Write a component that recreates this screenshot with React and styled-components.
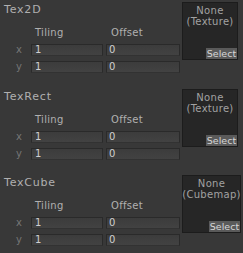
import React from "react";
import styled, { createGlobalStyle } from "styled-components";

const GlobalStyle = createGlobalStyle`
  body {
    margin: 0;
    background: #383838;
    font-family: "DejaVu Sans", "Liberation Sans", sans-serif;
  }
`;

const Panel = styled.div`
  width: 243px;
  height: 253px;
  background: #383838;
  overflow: hidden;
`;

const Section = styled.div`
  display: flex;
  height: ${(p) => p.h}px;
  padding: 0 5px 0 4px;
  box-sizing: border-box;
`;

const Left = styled.div`
  flex: 1;
  display: flex;
  flex-direction: column;
  padding-top: 3px;
`;

const Title = styled.div`
  font-size: 11px;
  line-height: 14px;
  color: #b0b0b0;
  letter-spacing: 0.8px;
`;

const Grid = styled.div`
  display: grid;
  grid-template-columns: 24px 72px 74px;
  column-gap: 3px;
  align-items: center;
  margin-top: ${(p) => p.mt}px;
`;

const Head = styled.div`
  font-size: 10px;
  line-height: 12px;
  color: #b0b0b0;
  letter-spacing: 0.3px;
  padding-left: ${(p) => p.pl}px;
`;

const Axis = styled.div`
  font-size: 10px;
  line-height: 12px;
  color: #767676;
  text-align: right;
  padding-right: 6px;
`;

const Field = styled.div`
  height: 12px;
  box-sizing: border-box;
  border: 1px solid #2a2a2a;
  border-bottom-color: #323232;
  background: linear-gradient(#3c3c3c, #424242);
  font-size: 10px;
  line-height: 10px;
  color: #cfcfcf;
  padding-left: ${(p) => p.pl}px;
`;

const Box = styled.div`
  width: 59px;
  height: 58px;
  margin-top: 2px;
  margin-left: 2px;
  box-sizing: border-box;
  border: 1px solid #1c1c1c;
  background: #262626;
  display: flex;
  flex-direction: column;
  align-items: center;
`;

const BoxText = styled.div`
  font-size: 10px;
  line-height: 11px;
  color: #a2a2a2;
  letter-spacing: 0.3px;
  text-align: center;
  padding-top: 2px;
  flex: 1;
  white-space: nowrap;
`;

const Select = styled.div`
  align-self: flex-end;
  width: 31px;
  height: 11px;
  background: #5a5a5a;
  color: #d6d6d6;
  font-size: 9.5px;
  line-height: 11px;
  text-align: center;
  white-space: nowrap;
`;

const slots = [
  { name: "Tex2D", kind: "Texture", h: 87 },
  { name: "TexRect", kind: "Texture", h: 86 },
  { name: "TexCube", kind: "Cubemap", h: 80 },
];

function Slot({ name, kind, h }) {
  return (
    <Section h={h}>
      <Left>
        <Title>{name}</Title>
        <Grid mt={10}>
          <span />
          <Head pl={4}>Tiling</Head>
          <Head pl={5}>Offset</Head>
        </Grid>
        <Grid mt={5}>
          <Axis>x</Axis>
          <Field pl={3}>1</Field>
          <Field pl={2}>0</Field>
        </Grid>
        <Grid mt={5}>
          <Axis>y</Axis>
          <Field pl={3}>1</Field>
          <Field pl={2}>0</Field>
        </Grid>
      </Left>
      <Box>
        <BoxText>
          None
          <br />({kind})
        </BoxText>
        <Select>Select</Select>
      </Box>
    </Section>
  );
}

export default function App() {
  return (
    <Panel>
      <GlobalStyle />
      {slots.map((s) => (
        <Slot key={s.name} {...s} />
      ))}
    </Panel>
  );
}
